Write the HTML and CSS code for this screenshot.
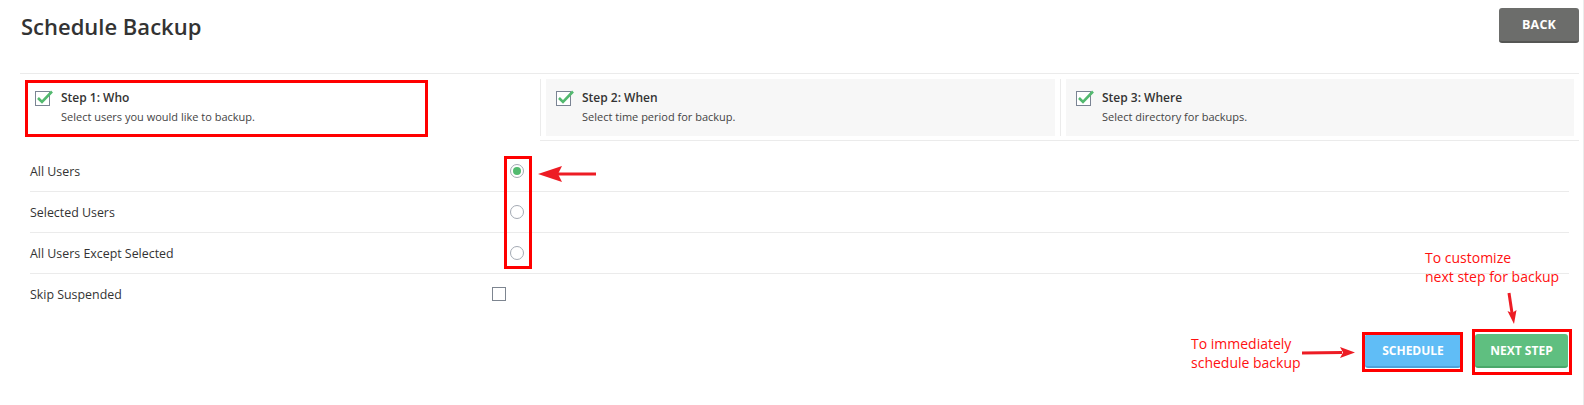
FILE: index.html
```html
<!DOCTYPE html>
<html lang="en">
<head>
<meta charset="utf-8">
<title>Schedule Backup</title>
<link rel="stylesheet" href="styles.css">
</head>
<body>
<div class="page">
  <header class="head">
    <h1 class="title">Schedule Backup</h1>
    <button class="btn btn-back">BACK</button>
  </header>

  <div class="panel">
    <div class="steps">
      <div class="step step-active">
        <div class="step-frame">
          <div class="step-box">
            <svg class="step-icon" width="20" height="16" viewBox="0 0 20 16"><rect x="0.5" y="1.5" width="14" height="14" fill="#fff" stroke="#7b8494"/><polyline points="3,8 7,12 17,1.5" fill="none" stroke="#53b96f" stroke-width="2.6"/></svg>
            <div class="step-text">
              <div class="step-title">Step 1: Who</div>
              <div class="step-desc">Select users you would like to backup.</div>
            </div>
          </div>
        </div>
      </div>
      <div class="step">
        <div class="step-frame">
          <div class="step-box">
            <svg class="step-icon" width="20" height="16" viewBox="0 0 20 16"><rect x="0.5" y="1.5" width="14" height="14" fill="#fff" stroke="#7b8494"/><polyline points="3,8 7,12 17,1.5" fill="none" stroke="#53b96f" stroke-width="2.6"/></svg>
            <div class="step-text">
              <div class="step-title">Step 2: When</div>
              <div class="step-desc">Select time period for backup.</div>
            </div>
          </div>
        </div>
      </div>
      <div class="step">
        <div class="step-frame">
          <div class="step-box">
            <svg class="step-icon" width="20" height="16" viewBox="0 0 20 16"><rect x="0.5" y="1.5" width="14" height="14" fill="#fff" stroke="#7b8494"/><polyline points="3,8 7,12 17,1.5" fill="none" stroke="#53b96f" stroke-width="2.6"/></svg>
            <div class="step-text">
              <div class="step-title">Step 3: Where</div>
              <div class="step-desc">Select directory for backups.</div>
            </div>
          </div>
        </div>
      </div>
    </div>

    <div class="rows">
      <div class="row"><span class="row-label">All Users</span><span class="radio radio-on"></span></div>
      <div class="row"><span class="row-label">Selected Users</span><span class="radio"></span></div>
      <div class="row"><span class="row-label">All Users Except Selected</span><span class="radio"></span></div>
      <div class="row row-last"><span class="row-label">Skip Suspended</span><span class="checkbox"></span></div>
    </div>

    <div class="actions">
      <button class="btn btn-schedule">SCHEDULE</button>
      <button class="btn btn-next">NEXT STEP</button>
    </div>
  </div>

  <div class="annot">
    <svg class="annot-svg" width="1584" height="405" viewBox="0 0 1584 405">
      <g fill="none" stroke="#ff0000" stroke-width="3">
        <rect x="26.5" y="81.5" width="400" height="54"/>
        <rect x="505.5" y="157.5" width="25" height="110"/>
        <rect x="1363.5" y="333.5" width="98" height="37"/>
        <rect x="1473.5" y="330.5" width="97" height="43"/>
      </g>
      <g stroke="#ed1c24" stroke-width="3" fill="#ed1c24">
        <line x1="596" y1="174" x2="556" y2="174"/>
        <polygon points="538,174 562,166 558,174 562,182" stroke="none"/>
        <line x1="1302" y1="353" x2="1342" y2="352.5"/>
        <polygon points="1355,352.5 1340,347 1343,352.5 1340,358" stroke="none"/>
        <line x1="1509" y1="293" x2="1512" y2="313"/>
        <polygon points="1514,324 1507.5,311 1512,313 1516.5,310" stroke="none"/>
      </g>
    </svg>
    <div class="note note-next">To customize<br>next step for backup</div>
    <div class="note note-schedule">To immediately<br>schedule backup</div>
  </div>
</div>
</body>
</html>
```

FILE: styles.css
```css
* { box-sizing: border-box; }

html, body {
  margin: 0;
  padding: 0;
  background: #fff;
}

body {
  font-family: "Open Sans", "Noto Sans", "DejaVu Sans", sans-serif;
  color: #333;
}

.page {
  position: relative;
  width: 1584px;
  height: 405px;
  overflow: hidden;
  border-right: 1px solid #ececec;
}

.head {
  display: flex;
  justify-content: space-between;
  align-items: flex-start;
  height: 73px;
  padding: 8px 4px 0 21px;
}

.title {
  margin: 3px 0 0;
  font-size: 22px;
  line-height: 30px;
  font-weight: 600;
  color: #333;
}

.btn {
  border: 0;
  font-family: "Open Sans", "Noto Sans", sans-serif;
  font-weight: 700;
  font-size: 12px;
  color: #fff;
  border-radius: 3px;
  padding: 0;
  cursor: pointer;
}

.btn-back {
  width: 80px;
  height: 35px;
  background: #6c6d6b;
  border-bottom: 2px solid #555654;
  font-size: 12.5px;
  letter-spacing: 0.2px;
}

.panel {
  margin-left: 20px;
  width: 1559px;
  border-top: 1px solid #ebebeb;
}

.steps {
  display: grid;
  grid-template-columns: 520px 520px 519px;
}

.step {
  padding: 5px 5px 4px 0;
  border-bottom: 1px solid #ebebeb;
}

.step-active {
  border-bottom-color: transparent;
}

.step-frame {
  padding-left: 5px;
}

.step + .step .step-frame {
  border-left: 1px solid #ebebeb;
}

.step-box {
  display: flex;
  align-items: flex-start;
  height: 57px;
  padding: 11px 10px 0;
  background: #f7f7f7;
}

.step-active .step-box {
  background: #fff;
}

.step-icon {
  flex: none;
  margin-right: 6px;
}

.step-title {
  font-size: 12px;
  font-weight: 600;
  line-height: 16px;
  color: #333;
  margin-bottom: 2px;
}

.step-desc {
  font-size: 11px;
  line-height: 18px;
  color: #444;
}

.rows {
  padding: 10px 10px 0;
}

.row {
  display: grid;
  grid-template-columns: 462px auto;
  justify-content: start;
  align-items: center;
  height: 41px;
  border-bottom: 1px solid #ebebeb;
}

.row-last {
  height: 40px;
  border-bottom: 0;
}

.row-label {
  font-size: 12.4px;
  color: #333;
}

.radio {
  display: block;
  width: 14px;
  height: 14px;
  margin-left: 18px;
  border: 1px solid #a4aab3;
  border-radius: 50%;
  background: #fff;
  position: relative;
}

.radio-on::after {
  content: "";
  position: absolute;
  left: 2px;
  top: 2px;
  width: 8px;
  height: 8px;
  border-radius: 50%;
  background: #52ba6f;
}

.checkbox {
  display: block;
  width: 14px;
  height: 14px;
  border: 1px solid #7d8590;
  background: #fff;
}

.actions {
  display: flex;
  justify-content: flex-end;
  gap: 14px;
  padding: 20px 11px 0 0;
}

.btn-schedule {
  width: 96px;
  height: 34px;
  background: #60bdf6;
  border-bottom: 2px solid #4ba2da;
}

.btn-next {
  width: 93px;
  height: 34px;
  background: #5fbf80;
  border-bottom: 2px solid #4aa86a;
}

.annot {
  position: absolute;
  left: 0;
  top: 0;
  width: 1584px;
  height: 405px;
  pointer-events: none;
}

.annot-svg {
  position: absolute;
  left: 0;
  top: 0;
}

.note {
  position: absolute;
  font-family: "Open Sans", "Noto Sans", sans-serif;
  font-size: 14px;
  line-height: 19px;
  color: #ff1010;
  white-space: nowrap;
}

.note-next {
  left: 1425px;
  top: 248px;
}

.note-schedule {
  left: 1191px;
  top: 334px;
}
```
